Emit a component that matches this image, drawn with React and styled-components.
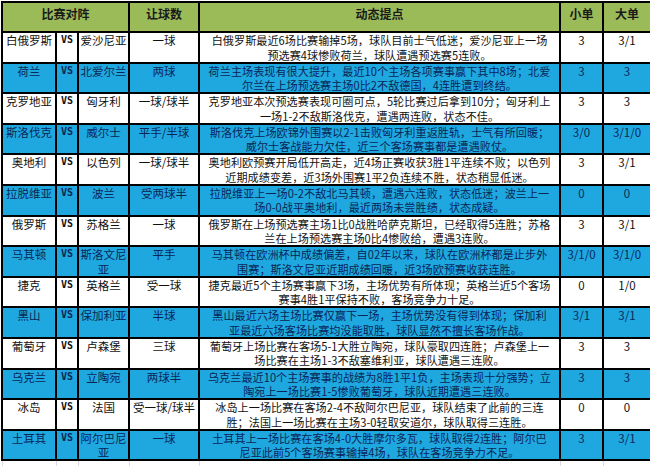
import React from 'react';
import styled, { createGlobalStyle } from 'styled-components';

const GlobalStyle = createGlobalStyle`
  html, body {
    margin: 0;
    padding: 0;
    background: #fff;
    overflow: hidden;
  }
  body {
    font-family: "Noto Sans CJK SC", "Noto Sans", sans-serif;
  }
`;

const Page = styled.div`
  width: 650px;
  height: 466px;
  overflow: hidden;
  padding: 1px 0 0 1px;
  box-sizing: border-box;
`;

const Table = styled.table`
  border-collapse: collapse;
  table-layout: fixed;
  width: 649px;
  color: #111;
`;

const HeadCell = styled.th`
  background: #9bbb59;
  border: 2px solid #000;
  padding: 3px 0 0;
  vertical-align: top;
  font-size: 12px;
  font-weight: 700;
  line-height: 15px;
  color: #1a1a1a;
  text-align: center;
`;

const HeadInner = styled.div`
  height: 25px;
`;

const Row = styled.tr`
  background: ${(p) => (p.$blue ? '#1fa8e0' : '#fff')};
  color: ${(p) => (p.$blue ? '#0a2657' : '#111')};
`;

const Cell = styled.td`
  border: 2px solid #000;
  padding: 0 1px;
  vertical-align: top;
  text-align: center;
  font-size: 11.5px;
  line-height: 14.5px;
  overflow: hidden;
`;

const Inner = styled.div`
  height: 28.6px;
  overflow: visible;
`;

const Vs = styled(Cell)`
  font-family: "DejaVu Sans Mono", "Liberation Mono", monospace;
  font-size: 10px;
  font-weight: 700;
`;

const Note = styled(Cell)`
  font-size: 11.1px;
  letter-spacing: 0.05px;
`;

const Line = styled.span`
  display: block;
  white-space: nowrap;
`;

const Filler = styled.tr`
  height: 10px;
`;

const FillCell = styled.td`
  border-left: 1px solid #dcdcdc;
  border-right: 1px solid #dcdcdc;
`;

const rows = [
  ['白俄罗斯', '爱沙尼亚', '一球', ['白俄罗斯最近6场比赛输掉5场，球队目前士气低迷；爱沙尼亚上一场', '预选赛4球惨败荷兰，球队遭遇预选赛5连败。'], '3', '3/1'],
  ['荷兰', '北爱尔兰', '两球', ['荷兰主场表现有很大提升，最近10个主场各项赛事赢下其中8场；北爱', '尔兰在上场预选赛主场0比2不敌德国，4连胜遭到终结。'], '3', '3'],
  ['克罗地亚', '匈牙利', '一球/球半', ['克罗地亚本次预选赛表现可圈可点，5轮比赛过后拿到10分；匈牙利上', '一场1-2不敌斯洛伐克，遭遇两连败，状态不佳。'], '3', '3'],
  ['斯洛伐克', '威尔士', '平手/半球', ['斯洛伐克上场欧锦外围赛以2-1击败匈牙利重返胜轨，士气有所回暖；', '威尔士客战能力欠佳，近三个客场赛事都是遭遇败仗。'], '3/0', '3/1/0'],
  ['奥地利', '以色列', '一球/球半', ['奥地利欧预赛开局低开高走，近4场正赛收获3胜1平连续不败；以色列', '近期成绩变差，近3场外围赛1平2负连续不胜，状态稍显低迷。'], '3', '3/1'],
  ['拉脱维亚', '波兰', '受两球半', ['拉脱维亚上一场0-2不敌北马其顿，遭遇六连败，状态低迷；波兰上一', '场0-0战平奥地利，最近两场未尝胜绩，状态成疑。'], '0', '0'],
  ['俄罗斯', '苏格兰', '一球', ['俄罗斯在上场预选赛主场1比0战胜哈萨克斯坦，已经取得5连胜；苏格', '兰在上场预选赛主场0比4惨败给，遭遇3连败。'], '3', '3/1'],
  ['马其顿', '斯洛文尼亚', '平手', ['马其顿在欧洲杯中成绩偏差，自02年以来，球队在欧洲杯都是止步外', '围赛；斯洛文尼亚近期成绩回暖，近3场欧预赛收获连胜。'], '3/1/0', '3/1/0'],
  ['捷克', '英格兰', '受一球', ['捷克最近5个主场赛事赢下3场，主场优势有所体现；英格兰近5个客场', '赛事4胜1平保持不败，客场竞争力十足。'], '0', '1/0'],
  ['黑山', '保加利亚', '半球', ['黑山最近六场主场比赛仅赢下一场，主场优势没有得到体现；保加利', '亚最近六场客场比赛均没能取胜，球队显然不擅长客场作战。'], '3/1', '3/1'],
  ['葡萄牙', '卢森堡', '三球', ['葡萄牙上场比赛在客场5-1大胜立陶宛，球队豪取四连胜；卢森堡上一', '场比赛在主场1-3不敌塞维利亚，球队遭遇三连败。'], '3', '3'],
  ['乌克兰', '立陶宛', '两球半', ['乌克兰最近10个主场赛事的战绩为8胜1平1负，主场表现十分强势；立', '陶宛上一场比赛1-5惨败葡萄牙，球队近期遭遇三连败。'], '3', '3'],
  ['冰岛', '法国', '受一球/球半', ['冰岛上一场比赛在客场2-4不敌阿尔巴尼亚，球队结束了此前的三连', '胜；法国上一场比赛在主场3-0轻取安道尔，球队取得三连胜。'], '0', '0'],
  ['土耳其', '阿尔巴尼亚', '一球', ['土耳其上一场比赛在客场4-0大胜摩尔多瓦，球队取得2连胜；阿尔巴', '尼亚此前5个客场赛事输掉4场，球队在客场竞争力不足。'], '3', '3/1'],
];

const widths = [54, 22, 51, 70, 361, 43, 48];

export default function App() {
  return (
    <>
      <GlobalStyle />
      <Page>
        <Table>
          <colgroup>
            {widths.map((w, i) => (
              <col key={i} style={{ width: w }} />
            ))}
          </colgroup>
          <thead>
            <tr>
              <HeadCell colSpan={3}><HeadInner>比赛对阵</HeadInner></HeadCell>
              <HeadCell><HeadInner>让球数</HeadInner></HeadCell>
              <HeadCell><HeadInner>动态提点</HeadInner></HeadCell>
              <HeadCell><HeadInner>小单</HeadInner></HeadCell>
              <HeadCell><HeadInner>大单</HeadInner></HeadCell>
            </tr>
          </thead>
          <tbody>
            {rows.map(([home, away, handicap, note, small, big], i) => (
              <Row key={home} $blue={i % 2 === 1}>
                <Cell><Inner>{home}</Inner></Cell>
                <Vs><Inner>VS</Inner></Vs>
                <Cell><Inner>{away}</Inner></Cell>
                <Cell><Inner>{handicap}</Inner></Cell>
                <Note>
                  <Inner>
                    {note.map((l) => (
                      <Line key={l}>{l}</Line>
                    ))}
                  </Inner>
                </Note>
                <Cell><Inner>{small}</Inner></Cell>
                <Cell><Inner>{big}</Inner></Cell>
              </Row>
            ))}
            <Filler>
              {widths.map((w, i) => (
                <FillCell key={i} />
              ))}
            </Filler>
          </tbody>
        </Table>
      </Page>
    </>
  );
}
